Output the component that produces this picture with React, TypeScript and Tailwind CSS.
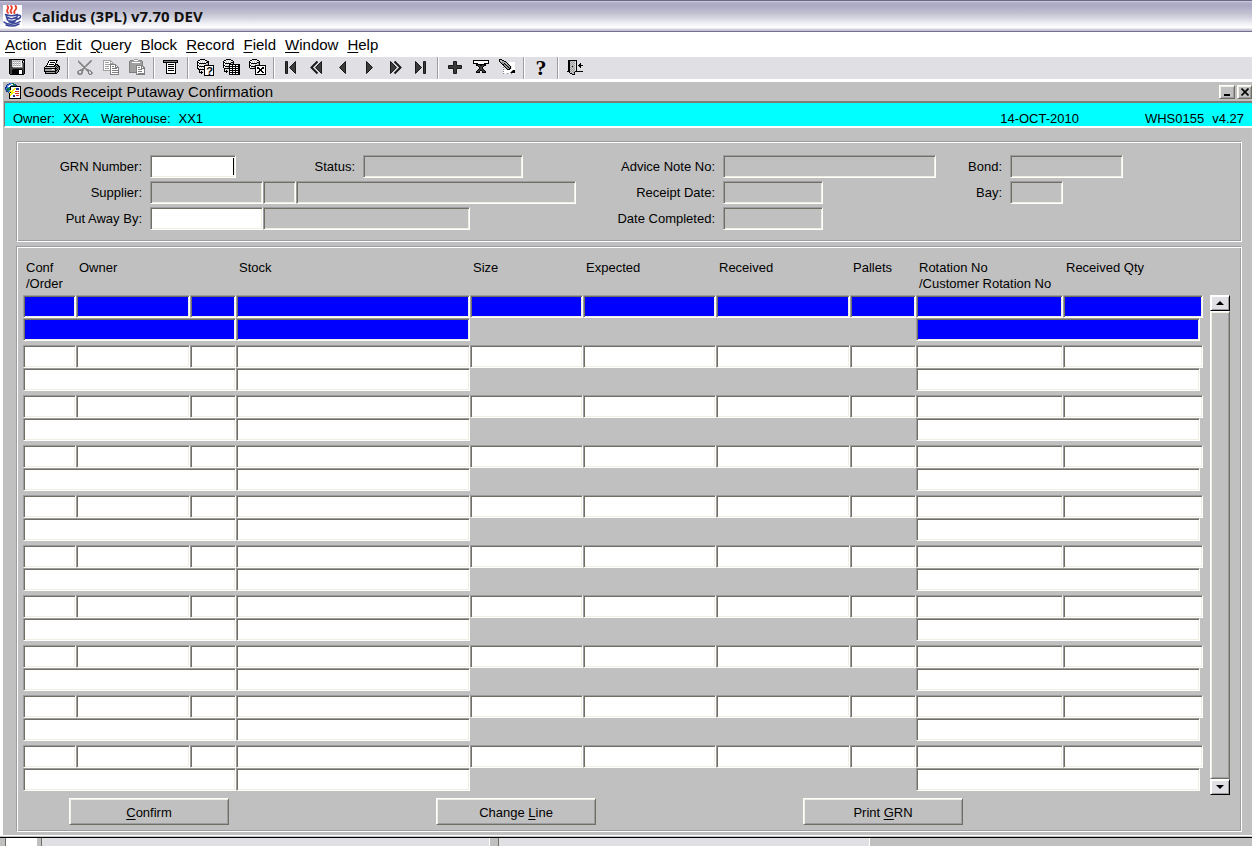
import { Fragment, type ReactNode } from "react";

const PALETTE: Record<string, string> = {
  k: "#000000",
  d: "#3f3f3f",
  g: "#808080",
  m: "#a0a0a0",
  l: "#cacaca",
  w: "#ffffff",
  r: "#e03020",
  b: "#1c2f9c",
  c: "#4a86d8",
  n: "#0f7a50",
  y: "#f8f000",
};

function Pixels({ rows, size = 18 }: { rows: string[]; size?: number }) {
  return (
    <svg width={size} height={size} viewBox={`0 0 ${size} ${size}`} shapeRendering="crispEdges" aria-hidden="true">
      {rows.map((row, y) =>
        [...row].map((ch, x) =>
          PALETTE[ch] ? <rect key={`${x}-${y}`} x={x} y={y} width="1" height="1" fill={PALETTE[ch]} /> : null,
        ),
      )}
    </svg>
  );
}

const SAVE = [
  " kkkkkkkkkkkkkkkk",
  " kddllllllllllgkk",
  " kddlmlmlmlmlwkwk",
  " kddlwlwlwlwlwkgk",
  " kddlmlmlmlmlwgdk",
  " kddlwlwlwlwlwgdk",
  " kddlmlmlmlmlwgdk",
  " kddlwwwwwwwwwgdk",
  " kdddggggggggggdk",
  " kddddddddddddddk",
  " kdddkkkkkkkkkddk",
  " kddkkkkkkkwwwkdk",
  " kddkkkkkkkwwwkdk",
  " kddkkkkkkkwwwkdk",
  " kddkkkkkkkwwwkdk",
  "  kkkkkkkkkkkkkk",
];

const PRINT = [
  "",
  "       kkkkkkkkk",
  "      kwwwwwwwk",
  "      kwkkkkkwk",
  "     kwwwwwwwk",
  "     kwkkkkkwkkk",
  "    kwwwwwwwkkmkk",
  "   kkkkkkkkkkmkmkk",
  "  kllllllllllkmkgk",
  "  kkkkkkkkkkkkkggk",
  "  kmmmmmmmwwmkgkgk",
  "  kmmmmmmmmmmkkgk",
  "  kkkkkkkkkkkkggk",
  "   kmmmmmmmmmkgk",
  "   kkkkkkkkkkkk",
];

const CUT = [
  "",
  "  m           mm",
  "  mm         mgm",
  "  mgm       mgm",
  "   mgm     mgm",
  "    mgm   mgm",
  "     mgm mgm",
  "      mggmm",
  "       mgm",
  "      mggmm",
  "    mmgm mggm",
  "  mggggm  mgggm",
  " mg  mg    mg gm",
  " mg  mg     g  gm",
  " mgmmgm     gm gm",
  "  mggm       ggm",
];

const COPY = [
  "",
  " mmmmmmmm",
  " mwwwwwwmm",
  " mwmmmmwmwm",
  " mwwwwwwmmmm",
  " mwmmmmmgggggg",
  " mwwwwwwgwwwwgg",
  " mwmmmmwgwggwgwg",
  " mwwwwwwgwwwwgggg",
  " mwmmmmwgwgggggwg",
  " mwwwwwwgwwwwwwwg",
  " mmmmmmmgwggggggg",
  "        gwwwwwwwg",
  "        gwggggggg",
  "        gwwwwwwwg",
  "        ggggggggg",
];

const PASTE = [
  "      mmmm",
  "  gggmwwwwmggg",
  " gmmmmmmmmmmmmg",
  " gmmwwwwwwwwmmg",
  " gmmmmmmmmmmmmg",
  " gmmmmmmmmmmmmg",
  " gmmmmmmggggggg",
  " gmmmmmmgwwwwgmg",
  " gmmmmmmgwggwgwgg",
  " gmmmmmmgwwwwgggg",
  " gmmmmmmgwggggwwg",
  " gmmmmmmgwwwwwwwg",
  " gmmmmmmgwggggwwg",
  " ggggggggwwwwwwwg",
  "        gwggggggg",
  "        ggggggggg",
];

const LIST = [
  "",
  " kkkkkkkkkkkkkkk",
  " kgggggggggggggk",
  " kkkkkkkkkkkkkkk",
  "    kwwwwwwwwk",
  "    kwkkkkkkwk",
  "    kwwwwwwwwk",
  "    kwkkkkkkwk",
  "    kwwwwwwwwk",
  "    kwkkkkkkwk",
  "    kwwwwwwwwk",
  "    kwkkkkkkwk",
  "    kwwwwwwwwk",
  "    kwwwwwwwwk",
  "    kkkkkkkkkk",
];

const ENTER_QUERY = [
  "    kkkkk",
  "  kkwlwlwkk",
  " kwwlwlwlwlkk",
  " kkwlwlwlwkkk",
  " kwkkkkkkkllk",
  " kwlwlwlwlmmk",
  " kkwlwlwkkkkkkkkkk",
  " kwkkkkkkwwwwwwwwk",
  " kwlwlwlkwwwwwwwwk",
  " kkwlwlwkwwwwwwwwk",
  "  kkkkkkkwwwwwwwwk",
  "   k    kwwwwwwwwk",
  "   k k  kwwwwwwwwk",
  "   kkkk kwwwwwwwwk",
  "     k  kwwwwwwwwk",
  "        kwwwwwwwwk",
  "        kkkkkkkkkk",
];

const RUN_QUERY = [
  "    kkkkk",
  "  kkwlwlwkk",
  " kwwlwlwlwlk",
  " kkwlwlwlkkk",
  " kwkkkkkklmk",
  " kwlwlwkkkkkkkkkkk",
  " kkwlwlkwwkwwkwwkk",
  " kwkkkkkkkkkkkkkkk",
  " kwlwlmkwwkwwkwwkk",
  "  kkkkkkkkkkkkkkkk",
  "  k    kwwkwwkwwkk",
  "  k k  kkkkkkkkkkk",
  "  kkkk kwwkwwkwwkk",
  "    k  kkkkkkkkkkk",
  "       kwwkwwkwwkk",
  "       kkkkkkkkkkk",
];

const CANCEL_QUERY = [
  "    kkkkk",
  "  kkwlwlwkk",
  " kwwlwlwlwlk",
  " kkwlwlwlkkk",
  " kwkkkkkklmk",
  " kwlwlwlwlmk",
  " kkwlwlkkkkkkkkkkk",
  " kwkkkkkwwwwwwwwwk",
  " kwlwlmkwkkwwwkkwk",
  "  kkkkkkwkkkwkkkwk",
  "       kwwwkkkwwwk",
  "       kwwwkkkwwwk",
  "       kwwkkwkkwwk",
  "       kwkkwwwkkwk",
  "       kwwwwwwwwwk",
  "       kkkkkkkkkkk",
];

const REMOVE = [
  "",
  " kkkkkkkkkkkkkkkk",
  " kwwwwwwwwwwwwwwk",
  " kwwwwwwwwwwwwwwk",
  " kkkkkwwwwwwkkkkk",
  "    kkkkkkkkkk",
  "    kkddkkddkk",
  "      kddddk",
  "       kddk",
  "       kddk",
  "      kddddk",
  "     kddkkddk",
  "    kddk  kddk",
  "    kkkk  kkkk",
];

const CLEAR = [
  " kkk",
  " klmkk",
  " kmlmmkk",
  "  kmgmlmk  wwwwww",
  "   kgmkmlk wwwwww",
  "    kkgkmmk wwwww",
  "     kgmkgmk wwww",
  "      kgmkgmk www",
  "     g kgmkgk www",
  "     w  kgmkk www",
  "     g   kkk wwww",
  "     wwwwwwwwwgkk",
  "     gwwwwwwwgkkk",
  "     wwwwwwwgkkkk",
  "     g w g w g w",
];

const EXIT = [
  "",
  "  kkkkkkkkk",
  "  kkmlmlm k",
  "  kklmlml k",
  "  kkmlmlm k   k",
  "  kklmlml k  kk",
  "  kkmlmlm k kkkkk",
  "  kklmkml k  kk",
  "  kkmlmlm k   k",
  "  kklmlml k",
  "  kkmlmlm k",
  "  kklmlml k",
  " kkkmlmlmkkkkkkkk",
  "   klmlmk",
  "    kkmlk",
  "      kkk",
];

const FORM_ICON = [
  "    bccnn",
  "  bbccwwnnb",
  " bccwwccnnnb",
  " bcwwkkkkkkkkkkk",
  "bbccnkwwwwwwwwwk",
  "bcnnnkwwwyybbbwk",
  "bnnnnkwwyywbbbwk",
  " bnncywyywwwwwwk",
  " bbccyyywwrrrrwk",
  "   bykyyyywwwwwk",
  "    kwyywwrrrrwk",
  "    kyywwwwwwwwk",
  "    kywwbbwrrrwk",
  "    kwwwbbwwwwwk",
  "    kwwwwwwwwwwk",
  "    kkkkkkkkkkkk",
];

function Shape({ children }: { children: ReactNode }) {
  return (
    <svg width="18" height="18" viewBox="0 0 18 18" fill="#3a3a3a" stroke="#1a1a1a" strokeWidth="1" aria-hidden="true">
      {children}
    </svg>
  );
}

type Tool = { label: string; icon: ReactNode };

const TOOL_GROUPS: Tool[][] = [
  [{ label: "Save", icon: <Pixels rows={SAVE} /> }],
  [{ label: "Print", icon: <Pixels rows={PRINT} /> }],
  [
    { label: "Cut", icon: <Pixels rows={CUT} /> },
    { label: "Copy", icon: <Pixels rows={COPY} /> },
    { label: "Paste", icon: <Pixels rows={PASTE} /> },
  ],
  [{ label: "List of values", icon: <Pixels rows={LIST} /> }],
  [
    {
      label: "Enter query",
      icon: (
        <span className="relative block">
          <Pixels rows={ENTER_QUERY} />
          <span className="absolute right-[1px] bottom-[1px] text-[11px] leading-[10px] font-bold">?</span>
        </span>
      ),
    },
    { label: "Execute query", icon: <Pixels rows={RUN_QUERY} /> },
    { label: "Cancel query", icon: <Pixels rows={CANCEL_QUERY} /> },
  ],
  [
    { label: "First record", icon: <Shape><path d="M3.5 2.5h2v12h-2zM13.500 2.500v12l-6-6z" /></Shape> },
    { label: "Previous block", icon: <Shape><path d="M9.500 2.500L3.500 8.500L9.500 14.500" fill="none" strokeWidth="2" /><path d="M13.500 2.500v12l-6-6z" /></Shape> },
    { label: "Previous record", icon: <Shape><path d="M11.500 2.500v12l-6-6z" /></Shape> },
    { label: "Next record", icon: <Shape><path d="M6.500 2.500v12l6-6z" /></Shape> },
    { label: "Next block", icon: <Shape><path d="M8.500 2.500L14.500 8.500L8.500 14.500" fill="none" strokeWidth="2" /><path d="M4.500 2.500v12l6-6z" /></Shape> },
    { label: "Last record", icon: <Shape><path d="M3.500 2.500v12l6-6zM11.500 2.500h2v12h-2z" /></Shape> },
  ],
  [
    { label: "Insert record", icon: <Shape><path d="M7.500 2.500h3v4h5v3h-5v5h-3v-5h-5v-3h5z" /></Shape> },
    { label: "Remove record", icon: <Pixels rows={REMOVE} /> },
    { label: "Clear record", icon: <Pixels rows={CLEAR} /> },
  ],
  [
    {
      label: "Help",
      icon: <span className="font-['Liberation_Serif',serif] text-[22px] leading-[18px] font-bold">?</span>,
    },
  ],
  [{ label: "Exit", icon: <Pixels rows={EXIT} /> }],
];

const MENUS = ["Action", "Edit", "Query", "Block", "Record", "Field", "Window", "Help"];

const SUNKEN =
  "block h-[23px] rounded-none border border-t-[#9d9da1] border-l-[#9d9da1] border-r-white border-b-white px-1 text-[13px] outline-none shadow-[inset_1px_1px_#716f64,inset_-1px_-1px_#f1efe2]";
const ETCHED =
  "border border-t-[#9d9da1] border-l-[#9d9da1] border-r-white border-b-white shadow-[inset_1px_1px_#fff,inset_-1px_-1px_#9d9da1]";
const RAISED =
  "border border-t-white border-l-white border-r-[#716f64] border-b-[#716f64] bg-[#c0c0c0] shadow-[inset_1px_1px_#f1efe2,inset_-1px_-1px_#9d9da1]";

function Hot({ text, at = 0 }: { text: string; at?: number }) {
  return (
    <>
      {text.slice(0, at)}
      <span className="underline underline-offset-2">{text[at]}</span>
      {text.slice(at + 1)}
    </>
  );
}

function Field({ id, label, labelWidth, width, open }: { id: string; label: string; labelWidth: string; width: string; open?: boolean }) {
  return (
    <>
      <label htmlFor={id} className={`${labelWidth} shrink-0 pr-2 text-right whitespace-nowrap`}>
        {label}
      </label>
      <input id={id} readOnly={!open} className={`${SUNKEN} ${width} ${open ? "bg-white" : "bg-[#c0c0c0]"}`} />
    </>
  );
}

const COLUMNS = [
  { name: "Conf", sub: "/Order", width: "w-[53px]" },
  { name: "Owner", width: "w-[114px]" },
  { name: "", width: "w-[46px]" },
  { name: "Stock", width: "" },
  { name: "Size", width: "w-[113px]" },
  { name: "Expected", width: "w-[133px]" },
  { name: "Received", width: "w-[134px]" },
  { name: "Pallets", width: "w-[66px]" },
  { name: "Rotation No", sub: "/Customer Rotation No", width: "w-[147px]" },
  { name: "Received Qty", width: "w-[140px]" },
];

function Cell({ label, selected }: { label: string; selected: boolean }) {
  return <input aria-label={label} className={`${SUNKEN} w-full ${selected ? "bg-[#0000ff] text-white" : "bg-white"}`} />;
}

function Lines() {
  return (
    <table className="min-w-0 flex-1 table-fixed border-collapse">
      <colgroup>
        {COLUMNS.map((c, i) => (
          <col key={i} className={c.width} />
        ))}
      </colgroup>
      <thead>
        <tr className="h-[35px]">
          {COLUMNS.map((c, i) => (
            <th key={i} className="p-0 pl-[3px] text-left align-top leading-4 font-normal whitespace-nowrap">
              {c.name}
              {c.sub && <span className="block">{c.sub}</span>}
            </th>
          ))}
        </tr>
      </thead>
      <tbody>
        {Array.from({ length: 10 }, (_, r) => (
          <Fragment key={r}>
            <tr>
              {COLUMNS.map((c, i) => (
                <td key={i} className="p-0">
                  <Cell label={`${c.name || "Owner code"} ${r + 1}`} selected={r === 0} />
                </td>
              ))}
            </tr>
            <tr>
              <td colSpan={3} className="p-0 pb-1">
                <Cell label={`Order ${r + 1}`} selected={r === 0} />
              </td>
              <td className="p-0 pb-1">
                <Cell label={`Stock description ${r + 1}`} selected={r === 0} />
              </td>
              <td colSpan={4} className="p-0" />
              <td colSpan={2} className="p-0 pr-[3px] pb-1">
                <Cell label={`Customer rotation ${r + 1}`} selected={r === 0} />
              </td>
            </tr>
          </Fragment>
        ))}
      </tbody>
    </table>
  );
}

function ScrollButton({ up }: { up?: boolean }) {
  return (
    <button
      aria-label={up ? "Scroll up" : "Scroll down"}
      className="flex h-4 w-full items-center justify-center border border-t-white border-l-white border-r-black border-b-black bg-[#e0dfe3] shadow-[inset_1px_1px_#fff,inset_-1px_-1px_#9d9da1]"
    >
      <svg width="8" height="4" viewBox="0 0 8 4" aria-hidden="true">
        <path d={up ? "M0 4L4 0L8 4z" : "M0 0h8L4 4z"} />
      </svg>
    </button>
  );
}

function ActionButton({ text, at }: { text: string; at: number }) {
  return (
    <button className={`${RAISED} h-[27px] w-40 pt-[2px]`}>
      <Hot text={text} at={at} />
    </button>
  );
}

export default function App() {
  return (
    <div className="min-h-screen bg-white font-['Liberation_Sans',Arial,sans-serif] text-[13px] text-black">
      <header className="flex h-8 items-center gap-[10px] border-t border-b border-t-[#6b6886] border-b-[#73718f] bg-[linear-gradient(#dcdae8_0px,#b6b3cd_1px,#a9a7c3_4px,#c3c3d3_13px,#f6f6fa_24px,#fff_27px,#d8d7e0_28px,#c2c0d0_30px)] pl-[3px]">
        <svg width="19" height="22" viewBox="0 0 19 22" fill="none" strokeLinecap="round" aria-hidden="true">
          <rect width="19" height="22" fill="#fff" />
          <path d="M5 8C2 4.500 7 4 4.500 1M8.500 8C5 5 11.500 4 8 1M11.500 8C9.500 6 15.500 4 12.500 1" stroke="#e8402c" strokeWidth="1.800" />
          <path d="M2.500 9.500c3 1.600 9 1.600 12 0M3 10l1.500 5c2 1.800 6.500 1.800 8.500 0l1.500-5M14.500 10.500c4.500-1.500 4 3-1 3.800M4.500 12.500c2 1.200 6 1.200 8.500 0M1 17c3 3 11 3 16-.5M3 20c4 1.600 9 1.200 13-1M6 16.800c2 .8 4 .8 6 0" stroke="#3a4598" strokeWidth="1.500" />
        </svg>
        <h1 className="font-['Open_Sans','Noto_Sans',sans-serif] text-[15px] font-bold text-[#111]">Calidus (3PL) v7.70 DEV</h1>
      </header>

      <nav aria-label="Menu" className="flex h-[25px] items-center gap-[9px] bg-white pt-[2px] pl-[5px] text-[15px]">
        {MENUS.map((m) => (
          <button key={m}>
            <Hot text={m} />
          </button>
        ))}
      </nav>

      <div role="toolbar" aria-label="Toolbar" className="flex h-[22px] bg-[#e0dfe3] pl-1">
        {TOOL_GROUPS.map((group, i) => (
          <Fragment key={i}>
            {i > 0 && <span className="mx-[3px] w-[2px] border-r border-l border-l-[#9d9da1] border-r-white" />}
            {group.map((t) => (
              <button key={t.label} aria-label={t.label} className="flex w-[26px] items-center justify-center">
                {t.icon}
              </button>
            ))}
          </Fragment>
        ))}
      </div>

      <main className="mt-[3px] ml-[3px] bg-[#c0c0c0]">
        <div className="flex h-[19px] items-center pl-[2px]">
          <Pixels rows={FORM_ICON} />
          <h2 className="flex-1 pt-px text-[15px] leading-[18px]">Goods Receipt Putaway Confirmation</h2>
          <button aria-label="Minimise" className={`${RAISED} mr-[2px] flex h-[14px] w-4 items-end justify-center pb-[2px]`}>
            <span className="h-[2px] w-[6px] bg-black" />
          </button>
          <button aria-label="Close" className={`${RAISED} flex h-[14px] w-[15px] items-center justify-center`}>
            <svg width="8" height="8" viewBox="0 0 8 8" stroke="#000" strokeWidth="1.600" aria-hidden="true">
              <path d="M0.500 0.500l7 7M7.500 0.500l-7 7" />
            </svg>
          </button>
        </div>

        <div className="ml-px flex h-[27px] items-center border-t-2 border-b-2 border-l border-t-[#7f7d78] border-b-white border-l-[#7f7d78] bg-[#00ffff] pt-2 pr-2 pl-2 whitespace-pre">
          <span>Owner:</span>
          <span className="ml-2">XXA</span>
          <span className="ml-3">Warehouse:</span>
          <span className="ml-2">XX1</span>
          <span className="ml-auto">14-OCT-2010</span>
          <span className="ml-[66px]">WHS0155</span>
          <span className="ml-2">v4.27</span>
        </div>

        <div className="flex flex-col gap-1 pt-[13px] pr-[10px] pb-[3px] pl-[13px]">
          <section aria-label="Receipt" className={`${ETCHED} flex pt-[13px] pb-[11px] pl-px`}>
            <div className="flex flex-col gap-[3px]">
              <div className="flex items-center">
                <div className="relative flex items-center">
                  <Field id="grn" label="GRN Number:" labelWidth="w-[132px]" width="w-[86px]" open />
                  <span className="absolute top-[3px] right-[2px] h-[17px] w-px bg-black" />
                </div>
                <Field id="status" label="Status:" labelWidth="w-[127px]" width="w-40" />
              </div>
              <div className="flex items-center">
                <Field id="supplier" label="Supplier:" labelWidth="w-[132px]" width="w-[113px]" />
                <input aria-label="Supplier type" readOnly className={`${SUNKEN} w-[33px] bg-[#c0c0c0]`} />
                <input aria-label="Supplier name" readOnly className={`${SUNKEN} w-[280px] bg-[#c0c0c0]`} />
              </div>
              <div className="flex items-center">
                <Field id="putaway" label="Put Away By:" labelWidth="w-[132px]" width="w-[113px]" open />
                <input aria-label="Put away name" readOnly className={`${SUNKEN} w-[207px] bg-[#c0c0c0]`} />
              </div>
            </div>
            <div className="flex flex-col gap-[3px]">
              <div className="flex items-center">
                <Field id="advice" label="Advice Note No:" labelWidth="w-[147px]" width="w-[213px]" />
              </div>
              <div className="flex items-center">
                <Field id="receipt-date" label="Receipt Date:" labelWidth="w-[147px]" width="w-[100px]" />
              </div>
              <div className="flex items-center">
                <Field id="completed" label="Date Completed:" labelWidth="w-[147px]" width="w-[100px]" />
              </div>
            </div>
            <div className="flex flex-col gap-[3px]">
              <div className="flex items-center">
                <Field id="bond" label="Bond:" labelWidth="w-[74px]" width="w-[113px]" />
              </div>
              <div className="flex items-center">
                <Field id="bay" label="Bay:" labelWidth="w-[74px]" width="w-[53px]" />
              </div>
            </div>
          </section>

          <section aria-label="Lines" className={`${ETCHED} pt-[13px] pb-[6px] pl-[6px]`}>
            <div className="flex pr-[11px]">
              <Lines />
              <div className="mt-[35px] ml-[7px] flex w-5 shrink-0 flex-col">
                <ScrollButton up />
                <div className="flex-1 border border-t-white border-l-white border-r-[#716f64] border-b-[#716f64] shadow-[inset_1px_1px_#f1efe2,inset_-1px_-1px_#9d9da1]" />
                <ScrollButton />
              </div>
            </div>
            <div className="mt-[3px] flex justify-between pr-[278px] pl-[46px]">
              <ActionButton text="Confirm" at={0} />
              <ActionButton text="Change Line" at={7} />
              <ActionButton text="Print GRN" at={6} />
            </div>
          </section>
        </div>
      </main>

      <footer>
        <div className="h-[3px] border-t border-b border-t-white border-b-black bg-[#c0c0c0]" />
        <div className="flex h-2 bg-[#c0c0c0]">
          <div className="w-[37px] border-l-[5px] border-l-[#c0c0c0] bg-white shadow-[inset_1px_0_#716f64]" />
          <div className="ml-1 w-[449px] border-r border-l border-l-[#716f64] border-r-white bg-[#e0dfe3]" />
          <div className="ml-2 w-[372px] border-r border-l border-l-[#716f64] border-r-white bg-[#e0dfe3]" />
        </div>
      </footer>
    </div>
  );
}
